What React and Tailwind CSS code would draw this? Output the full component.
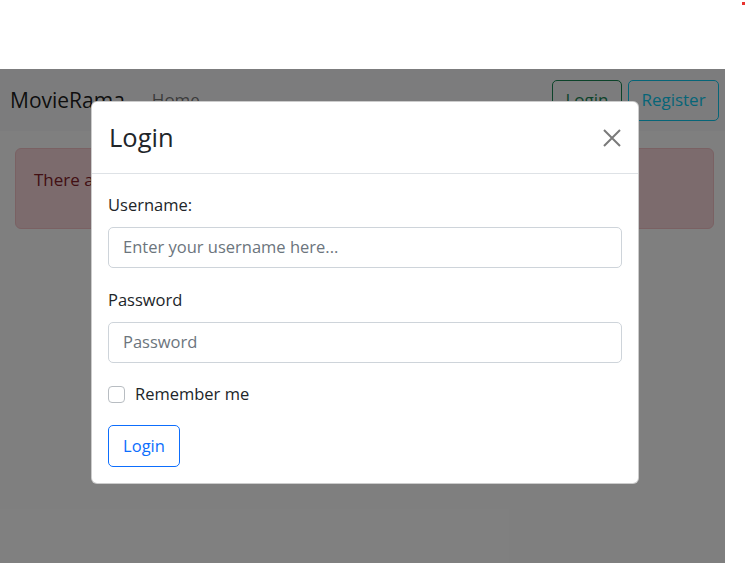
export default function App() {
  return (
    <div className="relative h-[563px] w-[747px] overflow-hidden bg-white font-['Open_Sans','Noto_Sans',sans-serif] text-[16.5px] text-[#212529]">
      <span className="absolute left-[742px] top-[2px] h-[3px] w-[3px] bg-[#e8332f]" />
      <div className="relative mt-[69px] h-[494px] w-[725px] bg-white">
        <nav className="flex h-[62px] items-center bg-[#f8f9fa] pl-[10px] pr-[6px]">
          <span className="text-[21px] leading-none text-black/90">MovieRama</span>
          <a className="ml-[27px] text-[17px] text-black/55">Home</a>
          <div className="ml-auto flex gap-[6px]">
            <button className="h-[41px] w-[70px] rounded-[5px] border border-[#198754] text-[17px] text-[#198754]">Login</button>
            <button className="h-[41px] w-[91px] rounded-[5px] border border-[#0dcaf0] text-[17px] text-[#0dcaf0]">Register</button>
          </div>
        </nav>
        <div className="pl-[15px] pt-[17px]">
          <div className="h-[81px] w-[699px] rounded-[6px] border border-[#f5c2c7] bg-[#f8d7da] px-[18px] pt-[18px] text-[17px] leading-[26px] text-[#842029]">
            There are no movies to show yet.
          </div>
        </div>
        <div className="absolute inset-0 bg-black/50 pl-[91px] pt-[32px]">
          <div className="w-[548px] rounded-[6px] border border-black/20 bg-white">
            <div className="flex h-[72px] items-center justify-between border-b border-[#dee2e6] px-[17px]">
              <h5 className="text-[25.5px] font-normal leading-[1.2] text-[#212529]">Login</h5>
              <button className="flex h-[18px] w-[18px] items-center justify-center" aria-label="Close">
                <svg width="18" height="18" viewBox="0 0 18 18" fill="none" stroke="#7a7a7a" strokeWidth="2">
                  <path d="M1 1L17 17M17 1L1 17" />
                </svg>
              </button>
            </div>
            <div className="flex flex-col px-[16px] pb-[16px] pt-[18px]">
              <label className="leading-[26px]">Username:</label>
              <div className="mt-[9px] flex h-[41px] items-center rounded-[5px] border border-[#ced4da] px-[14px] text-[#6c757d]">
                Enter your username here...
              </div>
              <label className="mt-[19px] leading-[26px]">Password</label>
              <div className="mt-[9px] flex h-[41px] items-center rounded-[5px] border border-[#ced4da] px-[14px] text-[#6c757d]">
                Password
              </div>
              <div className="mt-[18px] flex h-[26px] items-center gap-[10px]">
                <span className="h-[17px] w-[17px] rounded-[4px] border border-[#b8bdc2] bg-white" />
                <span className="leading-[26px]">Remember me</span>
              </div>
              <div className="mt-[18px]">
                <button className="h-[42px] w-[72px] rounded-[5px] border border-[#0d6efd] text-[16.5px] text-[#0d6efd]">Login</button>
              </div>
            </div>
          </div>
        </div>
      </div>
    </div>
  );
}
